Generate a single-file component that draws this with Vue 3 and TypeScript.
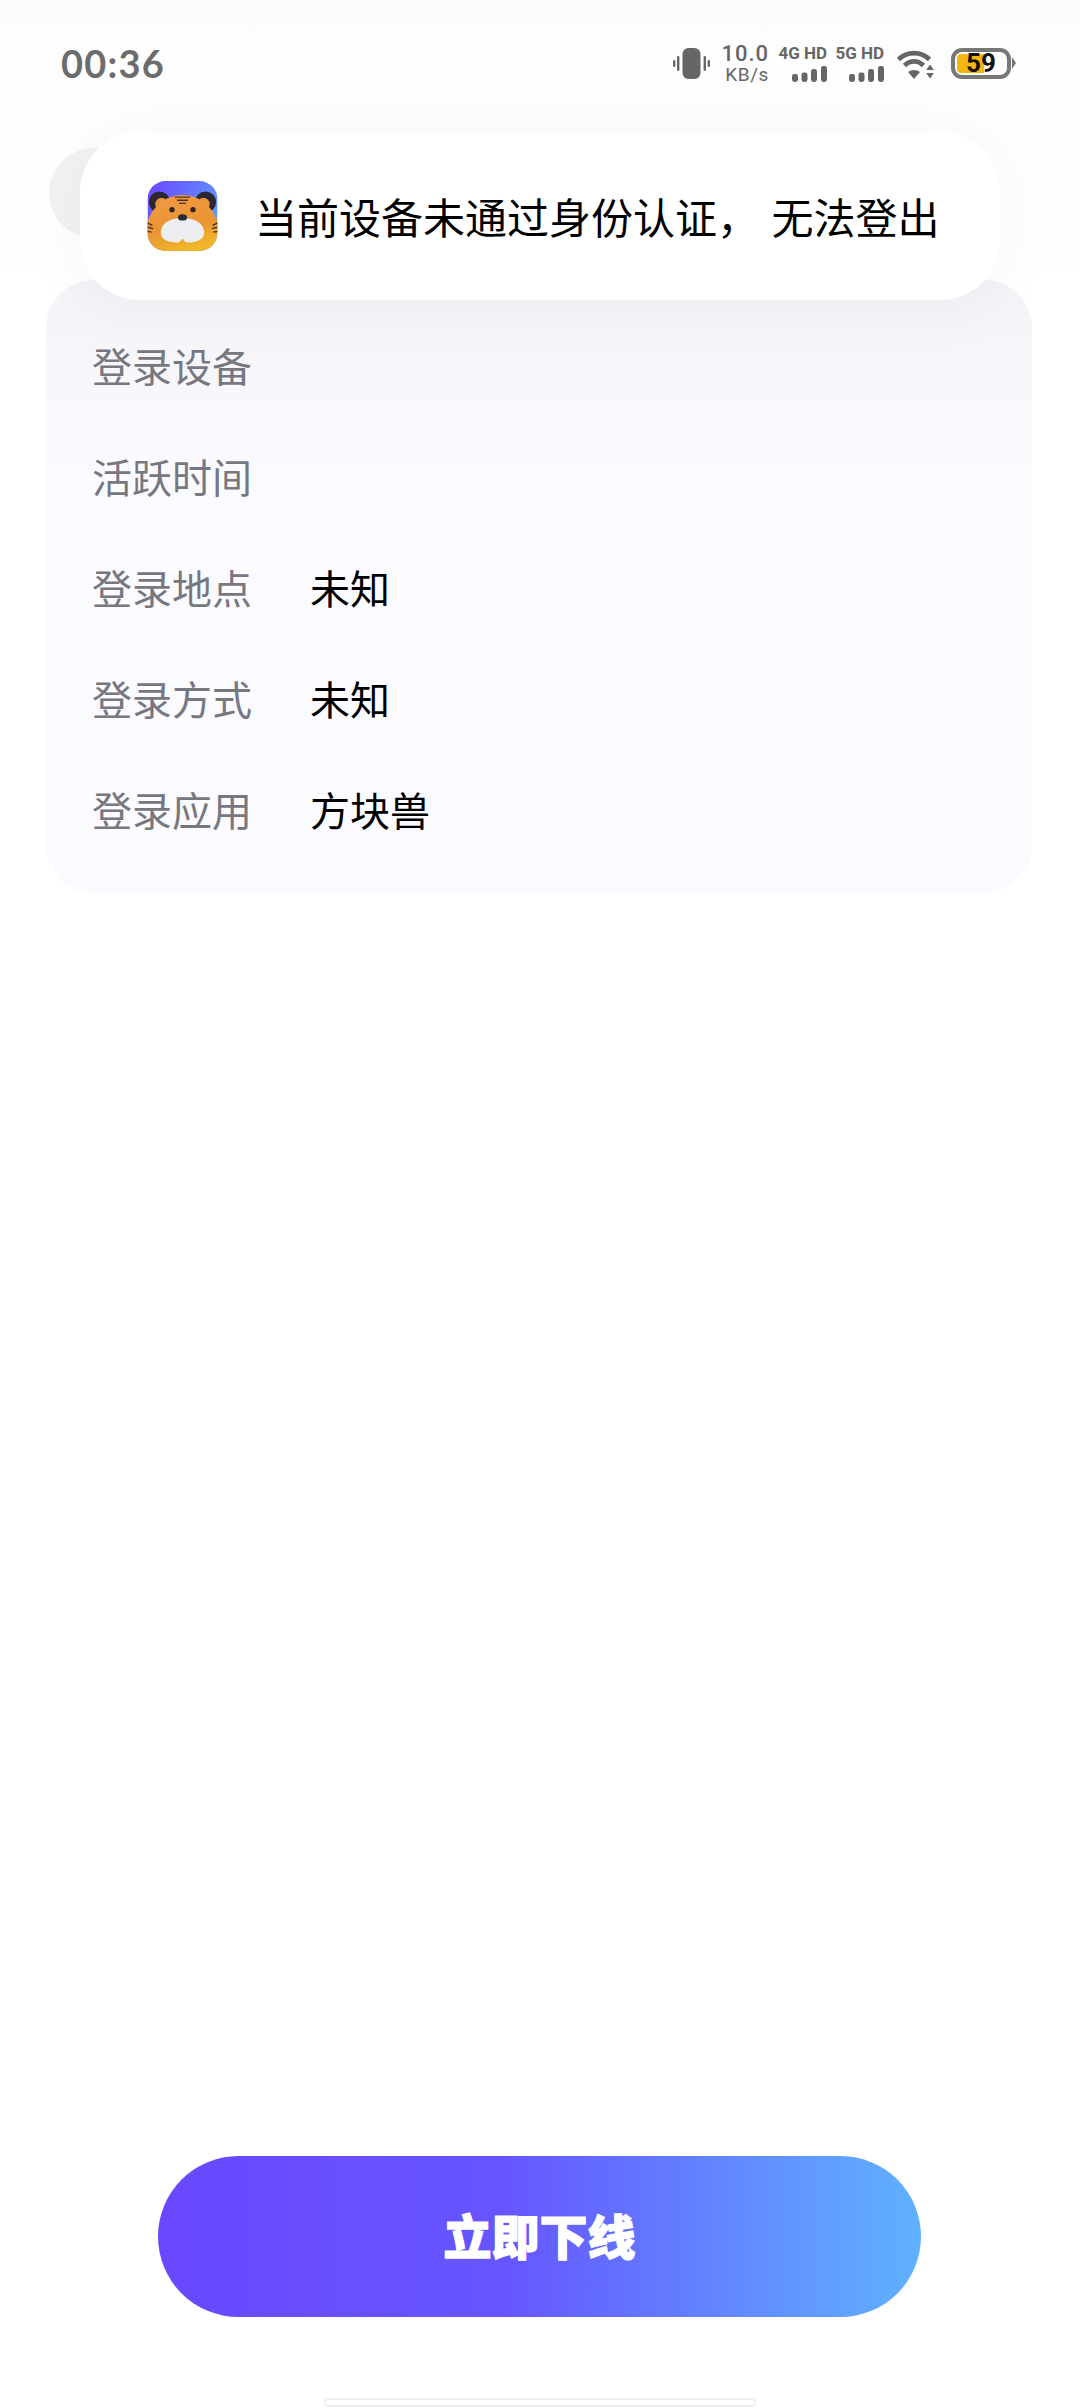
<script setup lang="ts">
interface InfoRow {
  label: string
  value: string
}

const rows: InfoRow[] = [
  { label: '登录设备', value: '' },
  { label: '活跃时间', value: '' },
  { label: '登录地点', value: '未知' },
  { label: '登录方式', value: '未知' },
  { label: '登录应用', value: '方块兽' },
]

const signalBars = [
  { x: 0, y: 8, h: 8 },
  { x: 9.5, y: 6.5, h: 9.5 },
  { x: 19, y: 3, h: 13 },
  { x: 29, y: 0, h: 16 },
]
</script>

<template>
  <div class="page">
    <!-- 状态栏 -->
    <div class="status-bar">
      <span class="time">00:36</span>
      <div class="status-icons">
        <svg class="ic-vibrate" viewBox="0 0 37 31" width="37" height="31">
          <rect x="9.5" y="0" width="18" height="31" rx="6" fill="#666" />
          <rect x="4" y="8" width="2.4" height="15" rx="1.2" fill="#666" />
          <rect x="0" y="12" width="2.4" height="7" rx="1.2" fill="#666" />
          <rect x="30.6" y="8" width="2.4" height="15" rx="1.2" fill="#666" />
          <rect x="34.6" y="12" width="2.4" height="7" rx="1.2" fill="#666" />
        </svg>
        <div class="speed">
          <span class="speed-num">10.0</span>
          <span class="speed-unit">KB/s</span>
        </div>
        <div class="net">
          <span class="net-label">4G HD</span>
          <svg class="net-bars" viewBox="0 0 35 16" width="35" height="16">
            <rect v-for="b in signalBars" :key="b.x" :x="b.x" :y="b.y" width="6" :height="b.h" rx="2.4" fill="#666" />
          </svg>
        </div>
        <div class="net">
          <span class="net-label">5G HD</span>
          <svg class="net-bars" viewBox="0 0 35 16" width="35" height="16">
            <rect v-for="b in signalBars" :key="b.x" :x="b.x" :y="b.y" width="6" :height="b.h" rx="2.4" fill="#666" />
          </svg>
        </div>
        <svg class="ic-wifi" viewBox="0 0 37 29" width="37" height="29">
          <path d="M1.5 9.5C10 1 24 1 32.5 9.5" fill="none" stroke="#666" stroke-width="4.6" />
          <path d="M7.5 15.5C13 10 21 10 26.5 15.5" fill="none" stroke="#666" stroke-width="4.6" />
          <path d="M11 22L17 29 23 22C19.5 19.3 14.5 19.3 11 22Z" fill="#666" />
          <path d="M33 14.5l3.8 5.5h-7.6zM33 28.5l-3.8-5.5h7.6z" fill="#666" />
        </svg>
        <div class="battery">
          <div class="battery-body">
            <div class="battery-fill"></div>
            <span class="battery-num">59</span>
          </div>
          <span class="battery-nub"></span>
        </div>
      </div>
    </div>

    <!-- 顶部返回按钮，被提示遮住大半 -->
    <div class="header">
      <div class="back-btn"></div>
    </div>

    <!-- 设备信息 -->
    <div class="card">
      <div v-for="row in rows" :key="row.label" class="row">
        <span class="row-label">{{ row.label }}</span>
        <span class="row-value">{{ row.value }}</span>
      </div>
    </div>

    <button class="offline-btn">立即下线</button>
    <div class="home-bar"></div>

    <!-- 提示 -->
    <div class="toast">
      <svg class="app-icon" viewBox="0 0 100 100" width="71" height="70">
        <defs>
          <linearGradient id="iconBg" x1="0" y1="0" x2="1" y2="0.6">
            <stop offset="0" stop-color="#6a45ff" />
            <stop offset="1" stop-color="#5f9eff" />
          </linearGradient>
          <linearGradient id="iconBody" x1="0" y1="0" x2="0.3" y2="1">
            <stop offset="0" stop-color="#f29a45" />
            <stop offset="0.65" stop-color="#ea9433" />
            <stop offset="1" stop-color="#efb52b" />
          </linearGradient>
          <clipPath id="iconClip">
            <rect width="100" height="100" rx="26" />
          </clipPath>
        </defs>
        <g clip-path="url(#iconClip)">
          <rect width="100" height="100" fill="url(#iconBg)" />
          <circle cx="17" cy="30" r="15" fill="#2b2630" />
          <circle cx="83" cy="30" r="15" fill="#2b2630" />
          <circle cx="20" cy="33" r="9" fill="#e9953c" />
          <circle cx="80" cy="33" r="9" fill="#e9953c" />
          <path d="M-2 66C3 40 24 20 50 20C76 20 97 40 102 66V102H-2Z" fill="url(#iconBody)" />
          <path d="M19 74C19 60 33 53 50 53C67 53 81 60 81 74C81 84 70 88 56 88C53 88 52 83 50 83C48 83 47 88 44 88C30 88 19 84 19 74Z" fill="#eceef2" />
          <circle cx="35" cy="41" r="3.8" fill="#2a2320" />
          <circle cx="65" cy="41" r="3.8" fill="#2a2320" />
          <ellipse cx="50" cy="52" rx="6.5" ry="4.6" fill="#2a2a35" />
          <path d="M39 23h22M42 27.5h16M45 32h10" stroke="#4a3426" stroke-width="2" />
          <path d="M0 60l7 3.5M0 66l8 2M0 72l6 1M100 60l-7 3.5M100 66l-8 2M100 72l-6 1" stroke="#4a3426" stroke-width="2" />
        </g>
      </svg>
      <span class="toast-text">当前设备未通过身份认证， 无法登出</span>
    </div>
  </div>
</template>

<style scoped>
.page {
  position: relative;
  display: flex;
  flex-direction: column;
  width: 1080px;
  height: 2408px;
  overflow: hidden;
  background: linear-gradient(180deg, #fcfcfd 0, #fefeff 90px, #fff 300px);
  font-family: "Noto Sans CJK SC", "Noto Sans", sans-serif;
}

.status-bar {
  display: flex;
  align-items: center;
  justify-content: space-between;
  height: 64px;
  margin-top: 31px;
  padding: 0 64px 0 61px;
}

.time {
  font-family: Lato, "Noto Sans", sans-serif;
  font-size: 38px;
  font-weight: 700;
  letter-spacing: 1.2px;
  color: #6c6c6c;
}

.status-icons {
  display: flex;
  align-items: center;
}

.ic-vibrate {
  margin-right: 13px;
}

.speed {
  display: flex;
  flex-direction: column;
  align-items: flex-end;
  width: 46px;
  margin-right: 11px;
  color: #666;
  font-family: Roboto, sans-serif;
  line-height: 1;
}

.speed-num {
  font-size: 22px;
  font-weight: 500;
  letter-spacing: 1px;
}

.speed-unit {
  margin-top: 0;
  font-size: 19px;
  letter-spacing: 0.6px;
}

.net {
  display: flex;
  flex-direction: column;
  align-items: flex-end;
  width: 47px;
  margin-right: 10px;
}

.net-label {
  font-family: Roboto, sans-serif;
  font-size: 17px;
  font-weight: 700;
  line-height: 16px;
  color: #666;
  white-space: nowrap;
}

.net-bars {
  margin-top: 5px;
}

.ic-wifi {
  margin: 2px 0 0 3px;
}

.battery {
  display: flex;
  align-items: center;
  margin-left: 17px;
}

.battery-body {
  position: relative;
  width: 60px;
  height: 31px;
  box-sizing: border-box;
  border: 4px solid #777;
  border-radius: 11px;
  overflow: hidden;
}

.battery-fill {
  position: absolute;
  top: 2px;
  bottom: 2px;
  left: 2px;
  width: 27px;
  border-radius: 4px 0 0 4px;
  background: #f6b60d;
}

.battery-num {
  position: absolute;
  inset: 0;
  display: flex;
  align-items: center;
  justify-content: center;
  font-family: Roboto, sans-serif;
  font-size: 26px;
  font-weight: 700;
  color: #111;
}

.battery-nub {
  width: 0;
  height: 0;
  margin-left: 1px;
  border-top: 6px solid transparent;
  border-bottom: 6px solid transparent;
  border-left: 4px solid #777;
}

.header {
  height: 185px;
  padding: 53px 0 0 49px;
  box-sizing: border-box;
}

.back-btn {
  width: 90px;
  height: 90px;
  border-radius: 50%;
  background: #f2f2f4;
}

.card {
  margin: 0 48px 0 46px;
  padding: 29px 48px 29px 46px;
  border-radius: 48px;
  background: linear-gradient(180deg, #f4f4f8 0, #f8f8fc 120px, #fafaff 200px);
}

.row {
  display: flex;
  align-items: center;
  height: 111px;
  font-size: 40px;
}

.row-label {
  width: 218px;
  color: #77777f;
}

.row-value {
  color: #000;
}

.offline-btn {
  display: block;
  width: 763px;
  height: 161px;
  margin: auto auto 0 158px;
  padding: 0 0 5px;
  border: none;
  border-radius: 81px;
  background: linear-gradient(90deg, #6a48ff 0, #6655ff 45%, #5fb2ff 100%);
  font-family: "Noto Sans CJK SC", sans-serif;
  font-size: 48px;
  font-weight: 900;
  color: #fff;
  -webkit-text-stroke: 1.2px #fff;
}

.home-bar {
  width: 432px;
  height: 9px;
  margin: 81px auto 1px 324px;
  box-sizing: border-box;
  border: 2px solid #eee;
  border-radius: 4px;
  background: #fff;
}

.toast {
  position: absolute;
  top: 132px;
  left: 80px;
  display: flex;
  align-items: center;
  width: 920px;
  height: 168px;
  padding: 0 0 0 67px;
  box-sizing: border-box;
  border-radius: 60px;
  background: #fff;
  box-shadow: 0 6px 70px rgba(20, 20, 50, 0.045);
}

.app-icon {
  flex-shrink: 0;
  margin-right: 37px;
}

.toast-text {
  margin-top: -2px;
  font-size: 42px;
  word-spacing: 3px;
  color: #000;
  white-space: pre;
}
</style>
